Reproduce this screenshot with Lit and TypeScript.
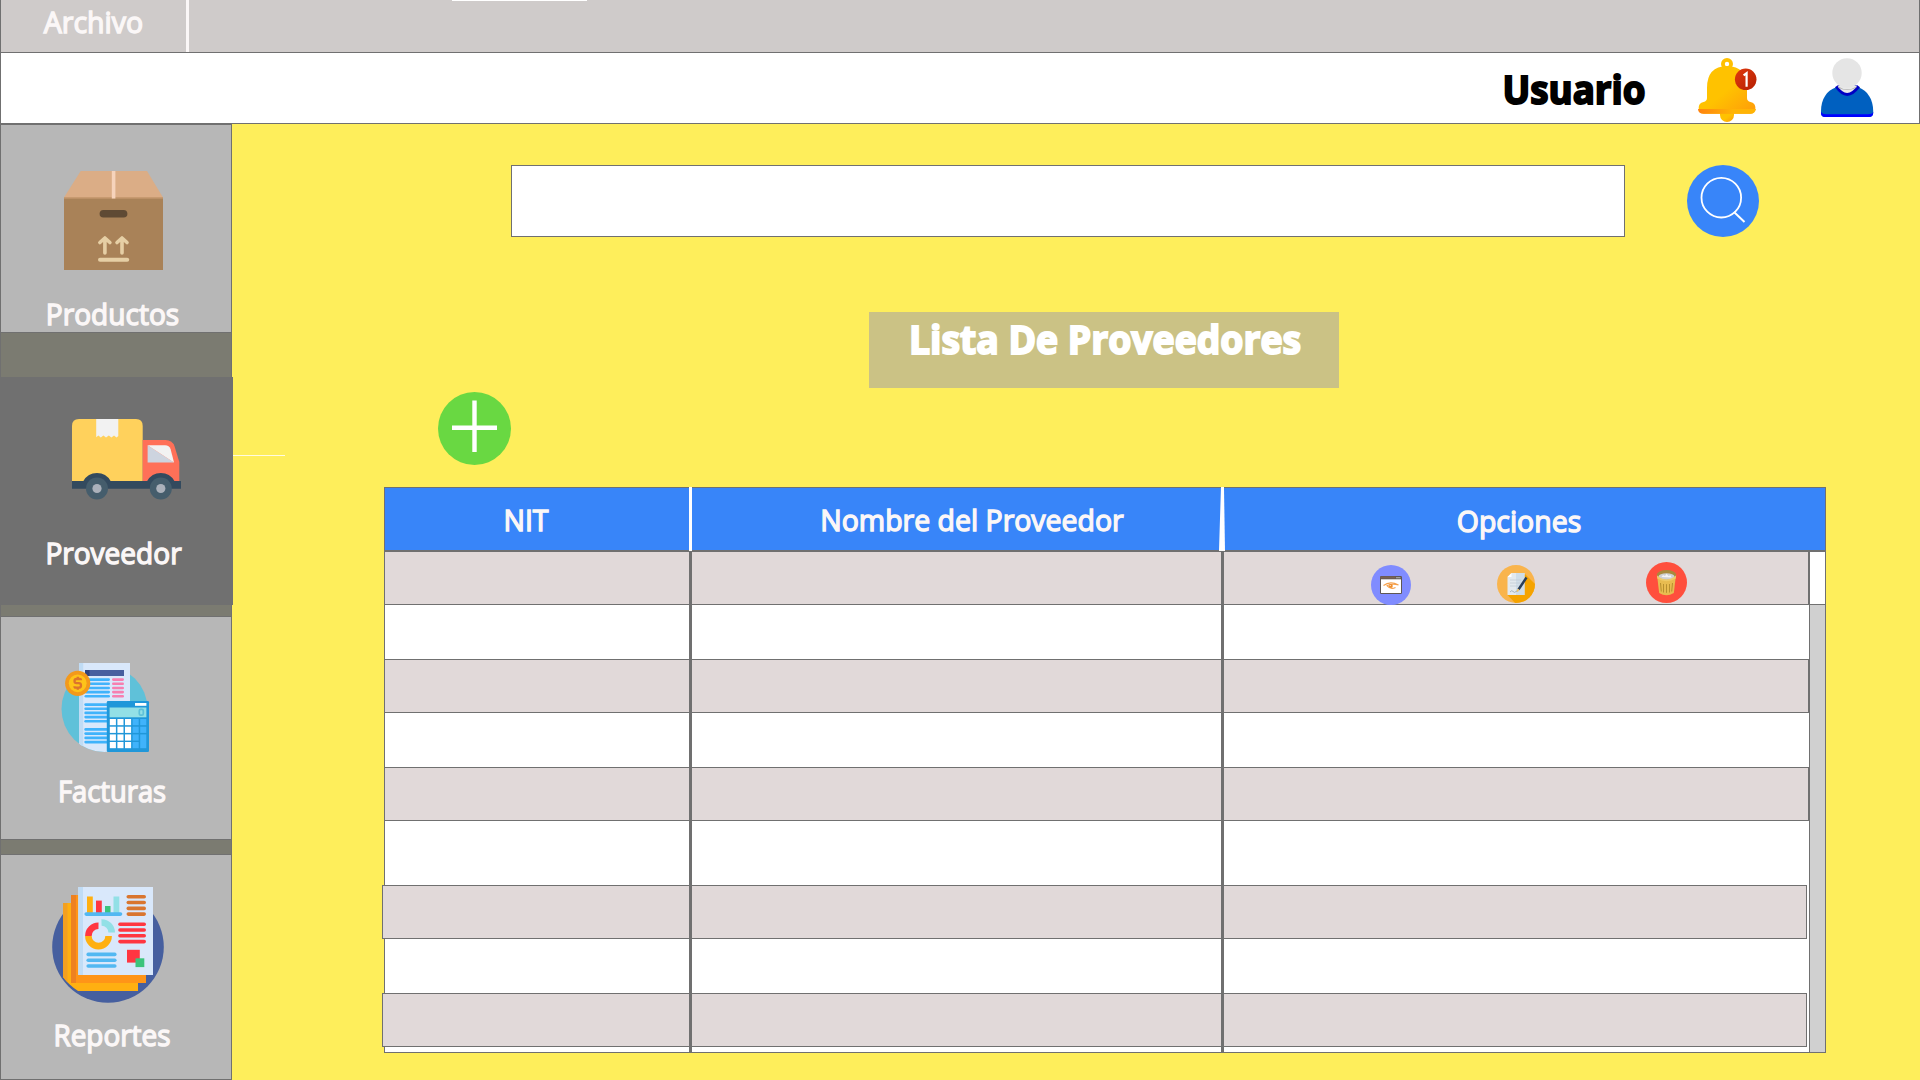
import { LitElement, html, css, svg } from "lit";
import { customElement } from "lit/decorators.js";
import { classMap } from "lit/directives/class-map.js";

const hLines = (x1: number, x2: number, ys: number[], color: string, w: number) =>
  ys.map(
    (y) => svg`<line x1=${x1 + w / 2} x2=${x2 - w / 2} y1=${y} y2=${y} stroke=${color} stroke-width=${w} stroke-linecap="round"/>`
  );

const boxIcon = html`<svg class="icon box" viewBox="64 171 99 99">
  <rect x="64" y="197.5" width="99" height="72.5" fill="#a98258" />
  <path d="M80.7 171H147L163 197.5H64Z" fill="#dbad86" />
  <rect x="64" y="197" width="99" height="1.6" fill="#c79a70" />
  <rect x="111.8" y="171" width="3.6" height="27.5" fill="#f6d3bb" />
  <rect x="99.6" y="210" width="27.8" height="7.6" rx="3.8" fill="#5f4a34" />
  <g fill="none" stroke="#e6cfa5" stroke-width="3.6" stroke-linecap="round" stroke-linejoin="round">
    <path d="M104.9 253V238.5M99.9 242.5L104.9 238L109.9 242.5" />
    <path d="M122 253V238.5M117 242.5L122 238L127 242.5" />
    <path d="M100 259.8H127.2" stroke-width="4" />
  </g>
</svg>`;

const truckIcon = html`<svg class="icon truck" viewBox="72 419 109 81">
  <path d="M72 481V426Q72 419 79 419H136Q142.7 419 142.7 426V481Z" fill="#ffd15c" />
  <path d="M96.2 419H118.3V436L116.5 437.6L114 435.4L111.4 437.6L108.8 435.4L106 437.6L103.4 435.4L100.8 437.6L98.4 435.4L96.2 437.2Z" fill="#f2f2f2" />
  <path d="M142.7 440H165.5Q172.5 440 174.6 446.5L179.3 462V481H142.7Z" fill="#ff7058" />
  <path d="M147.6 445.3V462.4H174Z" fill="#cdd4df" />
  <path d="M147.6 445.3H165Q169.3 445.3 170.7 449.5L174 462.4Z" fill="#f2f2f2" />
  <path d="M72 481H83.4A15.5 15.5 0 0 1 110.6 481H147.2A15.5 15.5 0 0 1 174.4 481H181V488.8H72Z" fill="#334a5e" />
  <circle cx="97" cy="488.5" r="11" fill="#455d6c" />
  <circle cx="97" cy="488.5" r="4.6" fill="#abb1bb" />
  <circle cx="160.8" cy="488.5" r="11" fill="#455d6c" />
  <circle cx="160.8" cy="488.5" r="4.6" fill="#abb1bb" />
</svg>`;

const invoiceIcon = html`<svg class="icon invoice" viewBox="61 662 89 91">
  <clipPath id="inv"><path d="M61 662H150V709H147.5A43 43 0 0 1 61.5 709Z" /></clipPath>
  <circle cx="104.5" cy="709" r="43" fill="#5fc1d9" />
  <g clip-path="url(#inv)">
    <rect x="79" y="663" width="51" height="90" fill="#d9e8fb" />
    <rect x="79" y="663" width="4.2" height="90" fill="#c0dcf5" />
  </g>
  <rect x="85" y="670" width="39" height="6" fill="#475f9f" />
  <rect x="85" y="670" width="4.5" height="6" fill="#2f437f" />
  ${hLines(84.5, 110, [679.6, 683.8, 688, 692.1, 696.3], "#40b3fb", 2.6)}
  ${hLines(112, 124, [679.6, 683.8, 688, 692.1, 696.3], "#f77fb0", 2.6)}
  ${hLines(84.3, 110, [704.6, 708.7, 712.9, 717.1, 721.3], "#40b3fb", 2.6)}
  ${hLines(84.3, 110, [729.4, 733.6, 737.9, 742.1], "#40b3fb", 2.6)}
  <rect x="106.8" y="701" width="42.2" height="51" rx="1.2" fill="#2097d9" />
  <rect x="135" y="703" width="11.4" height="2.8" fill="#fff" />
  <rect x="109.6" y="707.5" width="36.8" height="9.8" fill="#92e0e6" />
  <rect x="139.3" y="709.4" width="4" height="5.8" rx="1.4" fill="none" stroke="#5fc1d9" stroke-width="1.7" />
  ${[719, 726.7, 734.4, 742].map((y) =>
    [109.8, 117.4, 125, 132.6, 140.2].map((x, i) =>
      i === 4 && y > 730
        ? ""
        : svg`<rect x=${x} y=${y} width="6.1" height="6.2" fill=${i < 3 ? "#fff" : "#40b3fb"}/>`
    )
  )}
  <rect x="140.2" y="734.4" width="6.1" height="13.8" fill="#40b3fb" />
  <circle cx="77.7" cy="683.3" r="12.6" fill="#f3991b" />
  <circle cx="77.7" cy="683.3" r="8.9" fill="#fec319" />
  <path d="M81 680.3Q81 679 79.4 679H76.6A2 2 0 0 0 76.6 683.2H78.8A2 2 0 0 1 78.8 687.6H76Q74.4 687.6 74.4 686.2M77.8 676.8V679M77.8 687.6V689.8" fill="none" stroke="#dc742c" stroke-width="2.3" />
</svg>`;

const reportIcon = html`<svg class="icon report" viewBox="52 887 113 117">
  <clipPath id="rep"><path d="M52 887H164.5V947H164A56 56 0 0 1 52.2 947Z" /></clipPath>
  <circle cx="108" cy="947" r="55.8" fill="#465f9f" />
  <g clip-path="url(#rep)">
    <rect x="63" y="903" width="75" height="88" fill="#ffb011" />
    <rect x="63" y="903" width="4.5" height="88" fill="#f3a021" />
    <rect x="71" y="895" width="75" height="88" fill="#ff9518" />
    <rect x="71" y="895" width="5" height="88" fill="#ee8121" />
  </g>
  <rect x="78.3" y="887" width="74.7" height="88" fill="#d9e8fb" />
  <rect x="78.3" y="887" width="4.7" height="88" fill="#c0dcf5" />
  <rect x="87" y="896.5" width="5.8" height="17" fill="#ffb011" />
  <rect x="96" y="900.6" width="5.8" height="13" fill="#ff3641" />
  <rect x="105" y="906" width="5.5" height="7" fill="#3bc47c" />
  <rect x="113.5" y="896.5" width="5.8" height="17" fill="#92e0e6" />
  ${hLines(84.4, 122.3, [914.1], "#52b8f2", 3.6)}
  ${hLines(126.5, 146, [896.8, 902.5, 908.4, 914.1], "#d97630", 3.6)}
  <g fill="none" stroke-width="6.6">
    <path d="M88.4 936A10 10 0 0 0 108.6 936" stroke="#ffb011" />
    <path d="M88.4 936A10 10 0 0 1 98.5 925.8" stroke="#ff3641" />
    <path d="M101.5 922.5A10 10 0 0 1 111.7 932.5" stroke="#92e0e6" />
  </g>
  ${hLines(118.2, 146, [924.2, 930, 935.8, 941.6], "#ff3641", 3.6)}
  ${hLines(86.4, 116.6, [954.4, 960.3, 966], "#52b8f2", 3.6)}
  <rect x="127" y="949.8" width="12.8" height="12.8" fill="#ff3641" />
  <rect x="135.5" y="958.3" width="8.8" height="8.8" fill="#3bc47c" />
</svg>`;

const bellIcon = html`<svg class="bell" viewBox="1697 57 60 66">
  <defs>
    <linearGradient id="bg1" x1="0" y1="0" x2="1" y2="1">
      <stop offset=".5" stop-color="#ffc200" /><stop offset="1" stop-color="#ff9a0a" />
    </linearGradient>
    <linearGradient id="bg2" x1="0" y1="0" x2="1" y2="1">
      <stop offset="0" stop-color="#e0390d" /><stop offset="1" stop-color="#b52003" />
    </linearGradient>
    <linearGradient id="bg3" x1="0" y1="0" x2="1" y2="0">
      <stop offset="0" stop-color="#ff8210" /><stop offset=".6" stop-color="#ffb405" />
    </linearGradient>
  </defs>
  <circle cx="1727" cy="64" r="4.1" fill="none" stroke="#ffc000" stroke-width="3.8" />
  <path d="M1720 112.5H1734V115A7 7 0 0 1 1720 115Z" fill="url(#bg1)" />
  <path d="M1707 98V88Q1707 66.3 1727 66.3Q1747 66.3 1747 88V98Q1747 101 1750.5 102A6 6 0 0 1 1750.5 113.8H1703.7A6 6 0 0 1 1703.5 102Q1707 101 1707 98Z" fill="url(#bg1)" />
  <path d="M1698 109H1756A6 6 0 0 1 1750.5 113.8H1703.7Q1698 113.5 1698 109Z" fill="url(#bg3)" />
  <circle cx="1745.7" cy="79.3" r="10.8" fill="url(#bg2)" />
  <path d="M1743.6 75.4L1746.6 73.2V86.8" fill="none" stroke="#fff" stroke-width="2.2" />
</svg>`;

const userIcon = html`<svg class="user" viewBox="1820 56 54 61">
  <path d="M1821 110C1821 98 1827 89.5 1835.5 86.5H1859C1867 89.5 1873.2 98 1873.2 110V112Q1873 116 1869 116H1825Q1821 116 1821 112Z" fill="#0060c0" />
  <path d="M1821 111Q1822.5 113.2 1826 113.2H1868Q1872 113.2 1873.2 111V112Q1873 116 1869 116H1825Q1821 116 1821 112Z" fill="#0000ff" />
  <path d="M1835 86.3Q1847 103.5 1860 86.3L1857 84H1838Z" fill="#0000c4" />
  <path d="M1837.3 84.5Q1847 99.5 1857.3 84.5Z" fill="#e9e9e9" />
  <path d="M1838 85.2Q1847 91.5 1857 85.2L1856 87Q1847 91 1838.5 87Z" fill="#b4b4b4" />
  <circle cx="1847" cy="72" r="14.7" fill="#e5e5e5" />
</svg>`;

const viewIcon = html`<svg class="act" width="40" height="40" viewBox="0 0 40 40">
  <circle cx="20" cy="20" r="20" fill="#808cff" />
  <rect x="9" y="11" width="22" height="18" rx="1.2" fill="#5f5754" />
  <rect x="10" y="14.3" width="20" height="13.7" fill="#fff" />
  <rect x="9.5" y="11.5" width="15" height="2" fill="#7a6253" />
  <path d="M25 12.7H29.5" stroke="#a8a8a8" stroke-width="1.2" />
  <path d="M12.5 20.5Q19 15.5 27.5 20Q21 18.3 16 20.7Q19.5 25 24.5 22.5" fill="none" stroke="#f5a04b" stroke-width="1.1" />
  <circle cx="19.8" cy="20.9" r="2" fill="#ef8f2f" />
  <circle cx="19.2" cy="20.5" r=".6" fill="#fff" />
</svg>`;

const editIcon = html`<svg class="act" width="38" height="38" viewBox="0 0 38 38">
  <clipPath id="ed"><circle cx="19" cy="19" r="19" /></clipPath>
  <circle cx="19" cy="19" r="19" fill="#f9b44c" />
  <path d="M10.5 30L28 9L40 21V40H20Z" fill="#f5a300" clip-path="url(#ed)" />
  <path d="M10.5 12L14.5 8H27.5V30H10.5Z" fill="#e3e9ee" />
  <path d="M19 8H27.5V30H19Z" fill="#cfdde8" />
  <path d="M10.5 12H14.5V8Z" fill="#fff" />
  <path d="M13 15H24M13 18H24M13 21H21" stroke="#c3ccd4" stroke-width=".8" />
  <path d="M13 27Q15 24.5 16 26.5T20 26" fill="none" stroke="#97a3ad" stroke-width=".8" />
  <path d="M21.5 24.5L29.5 12.5" stroke="#2c3e57" stroke-width="2.4" />
  <path d="M20.2 26.5L21.6 24.2" stroke="#f0c060" stroke-width="1.6" />
</svg>`;

const trashIcon = html`<svg class="act" width="41" height="41" viewBox="0 0 41 41">
  <circle cx="20.5" cy="20.5" r="20.5" fill="#ff4f3d" />
  <path d="M11 13L13.2 31Q20.5 35.5 27.8 31L30 13Z" fill="#e8bc50" />
  <ellipse cx="20.5" cy="12.8" rx="9.7" ry="4.8" fill="#a88a3c" />
  <ellipse cx="20.5" cy="14.5" rx="8" ry="3.3" fill="#cfd0d2" />
  <path d="M15.5 15L17 13L19 14L20.5 11.7L22.5 14L24.5 13.2L25.5 15.5Z" fill="#f4f4f6" />
  <path d="M10.9 13.5Q20.5 21.5 30.1 13.5L29.8 16.5Q20.5 21.8 11.3 16.5Z" fill="#efcb68" />
  <path d="M14.5 21L15.3 29.5M17.5 22V30.5M20.5 22.2V30.8M23.5 22V30.5M26.5 21L25.7 29.5" stroke="#b8902f" stroke-width="1" />
</svg>`;

const navItems = [
  { id: "productos", label: "Productos", icon: boxIcon },
  { id: "proveedor", label: "Proveedor", icon: truckIcon },
  { id: "facturas", label: "Facturas", icon: invoiceIcon },
  { id: "reportes", label: "Reportes", icon: reportIcon },
];

const rows = ["shaded", "plain", "shaded", "plain", "shaded", "plain tall", "shaded shifted", "plain", "shaded shifted", "plain last"];

@customElement("app-root")
export class AppRoot extends LitElement {
  static styles = css`
    :host {
      display: grid;
      grid-template-rows: 53px 71px 956px;
      width: 1920px;
      height: 1080px;
      overflow: hidden;
      position: relative;
      background: #feee5b;
      font-family: "Open Sans", "Noto Sans", sans-serif;
    }
    * { box-sizing: border-box; }
    svg { display: block; flex: none; }
    .label {
      font-size: 30px;
      line-height: 40px;
      font-weight: 400;
      color: #fbf7f7;
      -webkit-text-stroke: 1.4px #fbf7f7;
      white-space: nowrap;
      text-align: center;
      transform: scaleX(var(--stretch, 0.935));
    }
    .heading {
      font-size: 39.5px;
      line-height: 55px;
      font-weight: 700;
      white-space: nowrap;
      -webkit-text-stroke: 2px currentColor;
      text-align: center;
      transform: scaleX(var(--stretch, 0.945));
    }
    .menubar {
      display: flex;
      background: #cfcbca;
      border: 1px solid #707070;
      border-top: 0;
    }
    .menu {
      width: 188px;
      padding-top: 2px;
      border-right: 3px solid #fbf7f7;
    }
    .menu .label { --stretch: 0.95; }
    .tab-edge {
      width: 135px;
      height: 1px;
      margin-left: 263px;
      background: #fff;
    }
    .topbar {
      display: flex;
      background: #fff;
      border: 1px solid #707070;
      border-top: 0;
    }
    .username {
      --stretch: 0.93;
      width: 200px;
      margin: 9px 0 0 1473px;
      color: #000;
    }
    .bell { width: 60px; height: 66px; margin: 4px 0 0 23px; }
    .user { width: 54px; height: 61px; margin: 4px 0 0 63px; }
    .body { display: grid; grid-template-columns: 232px 1fr; }
    .side {
      display: flex;
      flex-direction: column;
      background: #7b7b71;
      border: 0 solid #707070;
      border-width: 0 1px;
    }
    .item {
      display: flex;
      flex-direction: column;
      background: #b7b7b7;
      border: 0 solid #707070;
      border-width: 1px 0;
    }
    .productos { height: 209px; margin-bottom: 44px; padding-top: 46px; }
    .proveedor {
      height: 228px;
      width: 233px;
      margin: 0 0 11px -1px;
      padding: 41px 0 0 1px;
      background: #707070;
      position: relative;
    }
    .facturas { height: 224px; margin-bottom: 14px; padding-top: 45px; }
    .reportes { height: 226px; padding-top: 32px; }
    .box { width: 99px; height: 99px; margin: 0 0 24px 63px; }
    .truck { width: 109px; height: 81px; margin: 0 0 33px 71px; }
    .invoice { width: 89px; height: 91px; margin: 0 0 18px 60px; }
    .report { width: 113px; height: 117px; margin: 0 0 11px 51px; }
    .item .label { width: 223px; }
    .proveedor .label { width: 225px; }
    .facturas .label { width: 222px; --stretch: 0.91; }
    .reportes .label { width: 222px; --stretch: 0.93; }
    .connector {
      position: absolute;
      left: 233px;
      top: 77px;
      width: 52px;
      height: 1px;
      background: #fffbe0;
    }
    .main { display: flex; flex-direction: column; align-items: flex-start; }
    .search { display: flex; gap: 62px; margin: 41px 0 0 279px; }
    .field { width: 1114px; height: 72px; background: #fff; border: 1px solid #707070; }
    .title {
      width: 470px;
      height: 76px;
      margin: 75px 0 0 637px;
      padding-left: 2px;
      background: #cbc285;
      color: #fff;
    }
    .add { margin: 4px 0 22px 206px; }
    .table { width: 1442px; margin-left: 152px; position: relative; }
    .head {
      display: grid;
      grid-template-columns: 304px 3px 527px 6px 1fr;
      height: 64px;
      background: #3885f9;
      border: 1px solid #707070;
    }
    .head .label { padding-top: 12px; --stretch: 0.948; }
    .head .c-nit { margin-left: -22px; }
    .head .c-name { margin-left: 33px; }
    .head .c-opt { margin: 1px 12px 0 0; }
    .sep { background: #fff; margin: -1px 0; }
    .sep.taper { clip-path: polygon(33% 0, 83% 0, 100% 100%, 0 100%); }
    .grid { display: flex; height: 502px; background: #fff; }
    .rows { width: 1425px; }
    .row {
      display: flex;
      width: 1425px;
      height: 54px;
      border: 0 solid #707070;
      border-width: 0 0 0 1px;
    }
    .shaded { background: #e1d9d9; border-width: 1px; }
    .tall { height: 64px; }
    .last { height: 6px; border-bottom-width: 1px; }
    .shifted { margin-left: -2px; }
    .actions { display: flex; margin: 10px 0 0 986px; height: 42px; }
    .actions .act:nth-child(1) { margin: 3px 86px 0 0; }
    .actions .act:nth-child(2) { margin: 3px 111px 0 0; }
    .scroll { width: 17px; display: flex; flex-direction: column; }
    .thumb { height: 54px; background: #fff; border: 1px solid #707070; }
    .track { flex: 1; background: #d0d0d0; border: 1px solid #707070; border-top: 0; }
    .rule {
      position: absolute;
      top: 65px;
      bottom: 0;
      width: 3px;
      background: #707070;
    }
    .r1 { left: 305px; }
    .r2 { left: 837px; }
  `;

  render() {
    return html`
      <header class="menubar">
        <div class="menu"><div class="label">Archivo</div></div>
        <div class="tab-edge"></div>
      </header>
      <div class="topbar">
        <div class="username heading">Usuario</div>
        ${bellIcon} ${userIcon}
      </div>
      <div class="body">
        <nav class="side">
          ${navItems.map(
            (n) => html`<div class=${classMap({ item: true, [n.id]: true })}>
              ${n.icon}
              <div class="label">${n.label}</div>
              ${n.id === "proveedor" ? html`<i class="connector"></i>` : ""}
            </div>`
          )}
        </nav>
        <main class="main">
          <div class="search">
            <div class="field"></div>
            <svg width="72" height="72" viewBox="0 0 72 72">
              <circle cx="36" cy="36" r="36" fill="#3885f9" />
              <circle cx="34.3" cy="32.7" r="19.8" fill="none" stroke="#fff" stroke-width="1.8" />
              <path d="M47 47L57.5 57" stroke="#fff" stroke-width="2" />
            </svg>
          </div>
          <div class="title"><div class="heading">Lista De Proveedores</div></div>
          <svg class="add" width="73" height="73" viewBox="0 0 73 73">
            <circle cx="36.5" cy="36.5" r="36.5" fill="#69d842" />
            <path d="M36.5 8.5V60M14 35.7H59" stroke="#fff" stroke-width="4.4" />
          </svg>
          <section class="table">
            <div class="head">
              <div class="label c-nit">NIT</div>
              <div class="sep"></div>
              <div class="label c-name">Nombre del Proveedor</div>
              <div class="sep taper"></div>
              <div class="label c-opt">Opciones</div>
            </div>
            <div class="grid">
              <div class="rows">
                ${rows.map(
                  (r, i) => html`<div class="row ${r}">
                    ${i === 0 ? html`<div class="actions">${viewIcon}${editIcon}${trashIcon}</div>` : ""}
                  </div>`
                )}
              </div>
              <div class="scroll"><div class="thumb"></div><div class="track"></div></div>
            </div>
            <i class="rule r1"></i><i class="rule r2"></i>
          </section>
        </main>
      </div>
    `;
  }
}
